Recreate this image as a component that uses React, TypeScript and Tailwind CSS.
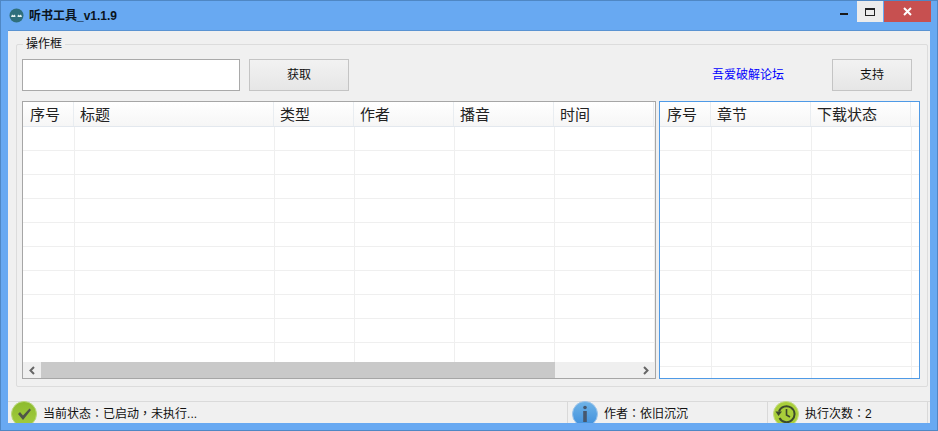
const FONT = "font-['Liberation_Sans','Noto_Sans_CJK_SC',sans-serif]";

function P({ children }: { children: string }) {
  return <span className="font-['Noto_Sans_CJK_TC',sans-serif]">{children}</span>;
}

function Grid({ cols, rows }: { cols: number[]; rows: number }) {
  return (
    <div className="flex-1 min-h-0 overflow-hidden">
      {Array.from({ length: rows }).map((_, i) => (
        <div key={i} className="flex h-6 border-b border-[#efefef]">
          {cols.map((w, j) => (
            <div key={j} style={{ width: w }} className="shrink-0 h-full border-r border-[#efefef]" />
          ))}
        </div>
      ))}
    </div>
  );
}

function Head({ cols }: { cols: [string, number, number][] }) {
  return (
    <div className="flex h-[25px] shrink-0 bg-gradient-to-b from-white to-[#f6f6f6] border-b border-[#e3e8ee]">
      {cols.map(([t, w, p]) => (
        <div
          key={t + w}
          style={{ width: w, paddingLeft: p }}
          className="shrink-0 h-full leading-[25px] text-[15px] text-[#222] border-r border-[#e9edf1]"
        >
          {t}
        </div>
      ))}
    </div>
  );
}

function Status({ w, icon, children }: { w: string; icon: React.ReactNode; children: React.ReactNode }) {
  return (
    <div className={`${w} h-full flex items-start border-r border-[#d9d9d9]`}>
      {icon}
      <span className="text-[12px] leading-[22px] text-[#111] ml-[6px]">{children}</span>
    </div>
  );
}

function Btn({ w, children }: { w: string; children: string }) {
  return (
    <div className={`${w} h-8 shrink-0 flex items-center justify-center border border-[#c4c4c4] bg-gradient-to-b from-[#f2f2f2] to-[#e6e6e6] text-[12px] text-[#111]`}>
      {children}
    </div>
  );
}

export default function App() {
  return (
    <div className={`${FONT} w-[938px] h-[431px] flex flex-col overflow-hidden bg-[#68a9f2] border border-[#4f87c4]`}>
      <div className="h-[29px] shrink-0 flex items-center">
        <svg width="15" height="15" viewBox="0 0 15 15" className="ml-[8px]">
          <circle cx="7.5" cy="7.5" r="7" fill="#2f6f7c" />
          <path d="M2 9 L3 6.5 L4.5 7.5 L6 6.5 L6.5 9 Z M8.5 9 L9 6.5 L10.5 7.5 L12 6.5 L13 9 Z" fill="#e6f2f2" />
        </svg>
        <span className="ml-[5px] text-[12px] font-bold text-[#0b1420] leading-none">听书工具_v1.1.9</span>
        <div className="ml-auto flex h-[21px] self-start mr-[6px]">
          <div className="w-[27px] flex items-center justify-center">
            <div className="w-2 h-[2px] mt-[5px] bg-[#1a1a1a]" />
          </div>
          <div className="w-[26px] bg-[#ececec] flex items-center justify-center">
            <div className="w-[10px] h-[8px] border border-[#222] border-t-2" />
          </div>
          <div className="w-[47px] ml-px bg-[#c75050] flex items-center justify-center">
            <svg width="9" height="9" viewBox="0 0 9 9">
              <path d="M1 1 L8 8 M8 1 L1 8" stroke="#fff" strokeWidth="2" />
            </svg>
          </div>
        </div>
      </div>

      <div className="mx-[7px] h-[393px] shrink-0 bg-[#f0f0f0] border-t border-[#5a93d2] flex flex-col">
        <div className="relative mt-[13px] ml-[8px] mr-[2px] h-[343px] shrink-0 border border-[#dcdcdc] rounded-[2px] pt-[14px] pl-[5px] pr-[7px]">
          <span className="absolute left-[6px] top-[-8px] bg-[#f0f0f0] px-[3px] text-[12px] leading-[14px] text-[#111]">操作框</span>
          <div className="flex items-center mr-[8px]">
            <div className="w-[218px] h-8 shrink-0 bg-white border border-[#a9a9a9]" />
            <div className="w-[9px] shrink-0" />
            <Btn w="w-[100px]">获取</Btn>
            <span className="ml-auto mr-[48px] text-[12px] text-[#0000ff]">吾爱破解论坛</span>
            <Btn w="w-[80px]">支持</Btn>
          </div>
          <div className="flex mt-[10px] gap-[3px] h-[278px]">
            <div className="w-[634px] h-[278px] shrink-0 flex flex-col bg-white border border-[#a6a6a6]">
              <Head cols={[["序号", 51, 7], ["标题", 200, 6], ["类型", 80, 6], ["作者", 100, 6], ["播音", 100, 6], ["时间", 100, 6]]} />
              <Grid cols={[52, 200, 80, 100, 100, 100]} rows={10} />
              <div className="h-[16px] shrink-0 flex bg-[#efefef] items-center">
                <div className="w-[18px] h-full flex items-center justify-center">
                  <svg width="8" height="9" viewBox="0 0 8 9"><path d="M6 1 L2.5 4.5 L6 8" fill="none" stroke="#666" strokeWidth="2" /></svg>
                </div>
                <div className="w-[514px] h-full bg-[#c9c9c9]" />
                <div className="ml-auto w-[18px] h-full flex items-center justify-center">
                  <svg width="8" height="9" viewBox="0 0 8 9"><path d="M2 1 L5.5 4.5 L2 8" fill="none" stroke="#666" strokeWidth="2" /></svg>
                </div>
              </div>
            </div>
            <div className="w-[261px] h-[278px] shrink-0 flex flex-col bg-white border border-[#4f9ae6]">
              <Head cols={[["序号", 51, 7], ["章节", 100, 6], ["下载状态", 100, 6]]} />
              <Grid cols={[52, 100, 100]} rows={11} />
            </div>
          </div>
        </div>
        <div className="mt-[14px] h-[22px] shrink-0 border-t border-[#dadada] flex">
          <Status
            w="w-[560px]"
            icon={
              <svg width="26" height="22" viewBox="0 0 26 22" className="ml-[3px] -mt-[1px] shrink-0">
                <defs>
                  <linearGradient id="g" x1="0" y1="0" x2="0" y2="1">
                    <stop offset="0" stopColor="#8dbb2e" />
                    <stop offset="1" stopColor="#a3cc3f" />
                  </linearGradient>
                </defs>
                <circle cx="13" cy="13" r="12.5" fill="url(#g)" stroke="#b9d77a" strokeWidth="1" />
                <path d="M7 13 L9 11 L12 14.5 L18.5 7.5 L20 9 L12 19 Z" fill="#4f5548" />
              </svg>
            }
          >
            当前状态<P>：</P>已启动<P>，</P>未执行...
          </Status>
          <Status
            w="w-[200px]"
            icon={
              <svg width="26" height="22" viewBox="0 0 26 22" className="ml-[4px] -mt-[1px] shrink-0">
                <defs>
                  <linearGradient id="b" x1="0" y1="0" x2="0" y2="1">
                    <stop offset="0" stopColor="#6fb4e8" />
                    <stop offset="1" stopColor="#3f8fdc" />
                  </linearGradient>
                </defs>
                <circle cx="13" cy="13" r="12.5" fill="url(#b)" stroke="#9cc4ea" strokeWidth="1" />
                <circle cx="13" cy="6.5" r="1.8" fill="#46586e" />
                <rect x="11.2" y="10" width="3.6" height="11" fill="#46586e" />
              </svg>
            }
          >
            作者<P>：</P>依旧沉沉
          </Status>
          <Status
            w="w-[160px]"
            icon={
              <svg width="26" height="22" viewBox="0 0 26 22" className="ml-[5px] -mt-[1px] shrink-0">
                <circle cx="13" cy="13" r="12.5" fill="#a9cf3a" stroke="#c5da84" strokeWidth="1" />
                <path d="M6 10.5 A8 8 0 1 1 6.5 17" fill="none" stroke="#3d4a2c" strokeWidth="2" />
                <path d="M13.5 8 V14 L17 16" fill="none" stroke="#3d4a2c" strokeWidth="1.6" />
                <path d="M2.5 10.5 L9 10.5 L5.5 15 Z" fill="#3d4a2c" />
              </svg>
            }
          >
            执行次数<P>：</P>2
          </Status>
        </div>
      </div>
    </div>
  );
}
